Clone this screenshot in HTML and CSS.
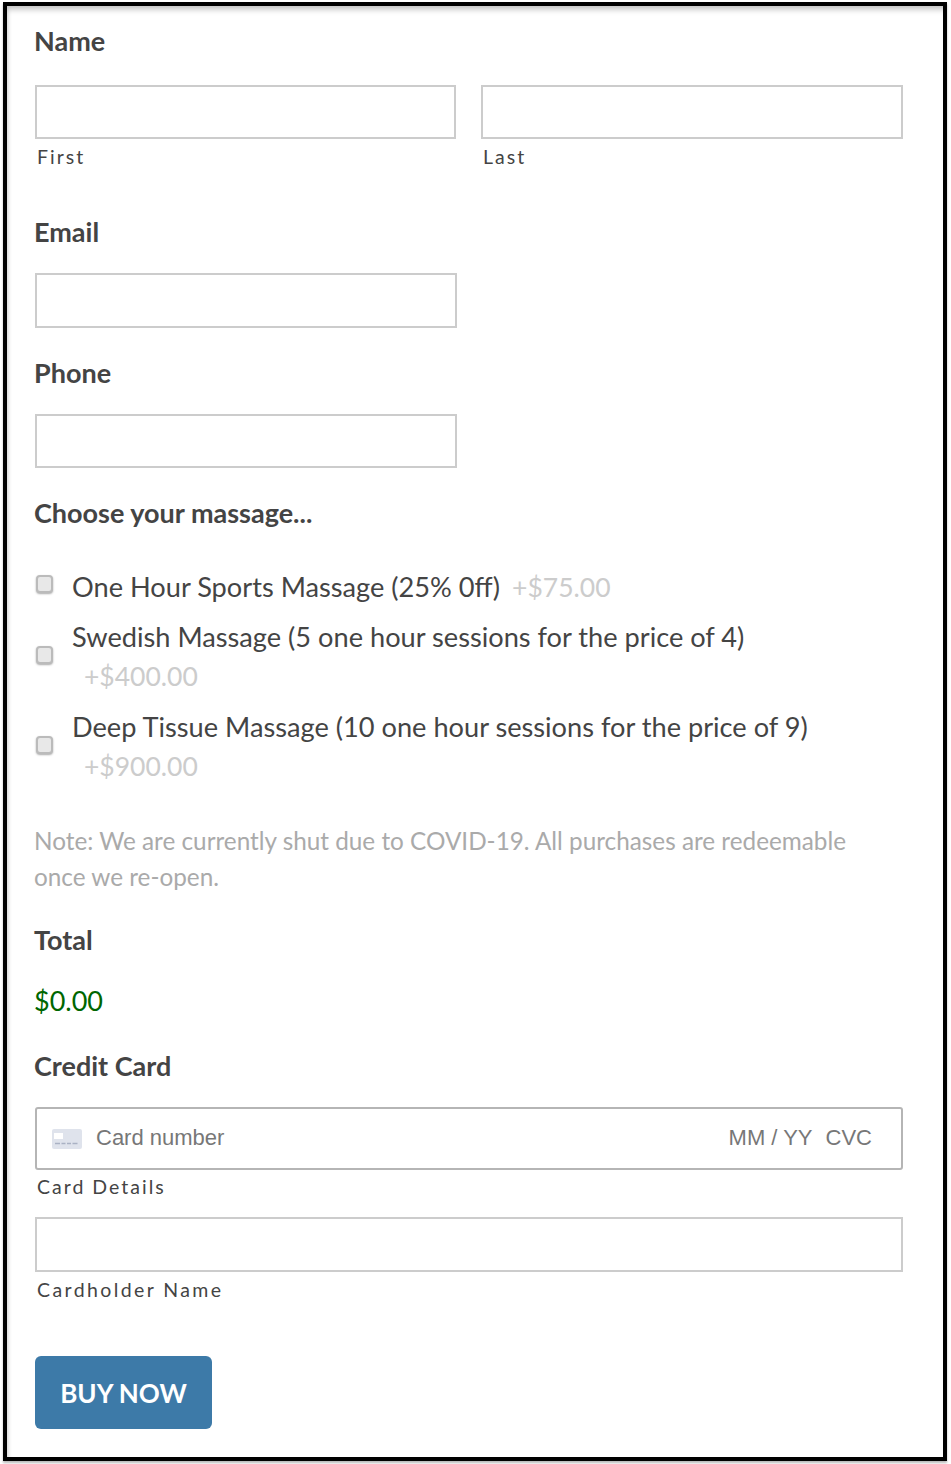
FILE: index.html
```html
<!DOCTYPE html>
<html lang="en">
  <head>
    <meta charset="UTF-8" />
    <meta name="viewport" content="width=device-width, initial-scale=1.0" />
    <title>Buy Massage</title>
    <link rel="stylesheet" href="styles.css">
  </head>
  <body>
    <form class="order-form">
      <div class="field field-name">
        <label class="field-title">Name</label>
        <div class="name-row">
          <div class="name-col">
            <input class="text-input" type="text" aria-label="First" />
            <span class="sub-label">First</span>
          </div>
          <div class="name-col">
            <input class="text-input" type="text" aria-label="Last" />
            <span class="sub-label">Last</span>
          </div>
        </div>
      </div>

      <div class="field field-email">
        <label class="field-title">Email</label>
        <input class="text-input half" type="text" aria-label="Email" />
      </div>

      <div class="field field-phone">
        <label class="field-title">Phone</label>
        <input class="text-input half" type="text" aria-label="Phone" />
      </div>

      <div class="field field-choice">
        <label class="field-title">Choose your massage...</label>
        <div class="choice-list">
          <label class="choice choice-single">
            <input type="checkbox" />
            <span class="choice-text">One Hour Sports Massage (25% 0ff) <span class="price">+$75.00</span></span>
          </label>
          <label class="choice">
            <input type="checkbox" />
            <span class="choice-text">Swedish Massage (5 one hour sessions for the price of 4)<br /><span class="price price-wrapped">+$400.00</span></span>
          </label>
          <label class="choice">
            <input type="checkbox" />
            <span class="choice-text">Deep Tissue Massage (10 one hour sessions for the price of 9)<br /><span class="price price-wrapped">+$900.00</span></span>
          </label>
        </div>
      </div>

      <p class="note">Note: We are currently shut due to COVID-19. All purchases are redeemable once we re-open.</p>

      <div class="field field-total">
        <label class="field-title">Total</label>
        <div class="total">$0.00</div>
      </div>

      <div class="field field-card">
        <label class="field-title">Credit Card</label>
        <div class="card-box">
          <svg class="card-icon" width="30" height="20" viewBox="0 0 30 20" aria-hidden="true">
            <rect width="30" height="20" rx="2" fill="#dfe3ec" />
            <rect x="2" y="4" width="9" height="6" fill="#fff" />
            <path d="M3 14.5h5M9.5 14.5h4M15 14.5h4M20.5 14.5h5" stroke="#aab2c4" stroke-width="1.5" />
          </svg>
          <span class="card-number">Card number</span>
          <span class="card-expiry">MM / YY</span>
          <span class="card-cvc">CVC</span>
        </div>
        <span class="sub-label card-label">Card Details</span>
        <input class="text-input cardholder" type="text" aria-label="Cardholder Name" />
        <span class="sub-label cardholder-label">Cardholder Name</span>
      </div>

      <button class="buy-button" type="button">BUY NOW</button>
    </form>
  </body>
</html>
```

FILE: styles.css
```css
html, body {
  margin: 0;
  padding: 0;
}

body {
  font-family: Lato, "Open Sans", sans-serif;
  background-color: #fff;
  color: #444;
  width: 951px;
  height: 1464px;
  overflow: hidden;
}

.order-form {
  box-sizing: border-box;
  margin: 2px 0 0 3px;
  width: 944px;
  height: 1459px;
  border: 4px solid #000;
  padding: 0 40px 0 28px;
  background: #fff;
  box-shadow: inset 0 8px 6px -5px #bbb, inset 5px 0 4px -4px #ccc, 0 2px 2px #bbb;
}

.field-title {
  display: block;
  margin-left: -1px;
  font-size: 27px;
  font-weight: 700;
  line-height: 32px;
  color: #444;
}

.text-input {
  display: block;
  box-sizing: border-box;
  width: 100%;
  height: 54px;
  border: 2px solid #ccc;
  background: #fff;
  margin: 0;
}

.half {
  width: 422px;
}

.sub-label {
  display: block;
  font-size: 19.5px;
  line-height: 24px;
  letter-spacing: 2px;
  padding: 6px 0 0 2px;
  color: #444;
}

.field-name {
  padding-top: 19px;
}

.name-row {
  display: flex;
  gap: 25px;
  margin-top: 28px;
}

.name-col {
  flex: 1;
}

.name-col:first-child {
  flex: 0 0 421px;
}

.field-email {
  margin-top: 47px;
}

.field-email .text-input,
.field-phone .text-input {
  margin-top: 25px;
}

.field-email .text-input {
  height: 55px;
}

.field-phone {
  margin-top: 29px;
}

.field-choice {
  margin-top: 29px;
}

.choice-list {
  margin-top: 38px;
}

.choice {
  display: flex;
  align-items: center;
  margin-bottom: 12px;
}

.choice-single {
  margin-bottom: 11px;
}

.choice input {
  appearance: none;
  box-sizing: border-box;
  width: 17px;
  height: 18px;
  margin: -2px 19px 0 1px;
  flex: none;
  border: 2px solid #bbb;
  border-radius: 4px;
  background: #e8e8e8;
  box-shadow: 0 1px 2px #aaa;
}

.choice-single input {
  margin-top: -6px;
}

.choice-text {
  font-size: 27.2px;
  line-height: 39px;
  color: #444;
}

.price {
  font-size: 26.5px;
  line-height: 1;
  color: #ccc;
  margin-left: 5px;
}

.price-wrapped {
  margin-left: 12px;
}

.note {
  margin: 38px 0 0 -1px;
  font-size: 24.3px;
  line-height: 36px;
  color: #aaa;
}

.field-total {
  margin-top: 29px;
}

.total {
  margin-top: 29px;
  margin-left: -1px;
  font-size: 27px;
  line-height: 32px;
  color: #060;
}

.field-card {
  margin-top: 33px;
}

.card-box {
  display: flex;
  align-items: center;
  box-sizing: border-box;
  height: 63px;
  margin-top: 25px;
  padding: 0 29px 2px 15px;
  border: 2px solid #b5b5b5;
  border-radius: 3px;
  font-family: "Liberation Sans", Arial, sans-serif;
  font-size: 22px;
  color: #777;
}

.card-icon {
  flex: none;
  margin: 2px 14px 0 0;
}

.card-number {
  flex: 1;
}

.card-expiry {
  margin-right: 13px;
}

.card-label {
  padding-top: 5px;
}

.cardholder {
  height: 55px;
  margin-top: 18px;
}

.cardholder-label {
  letter-spacing: 2.4px;
}

.buy-button {
  display: block;
  width: 177px;
  height: 73px;
  margin-top: 54px;
  border: none;
  border-radius: 6px;
  background: #3d7aa8;
  color: #fff;
  font-family: inherit;
  font-size: 26px;
  font-weight: 700;
}
```
